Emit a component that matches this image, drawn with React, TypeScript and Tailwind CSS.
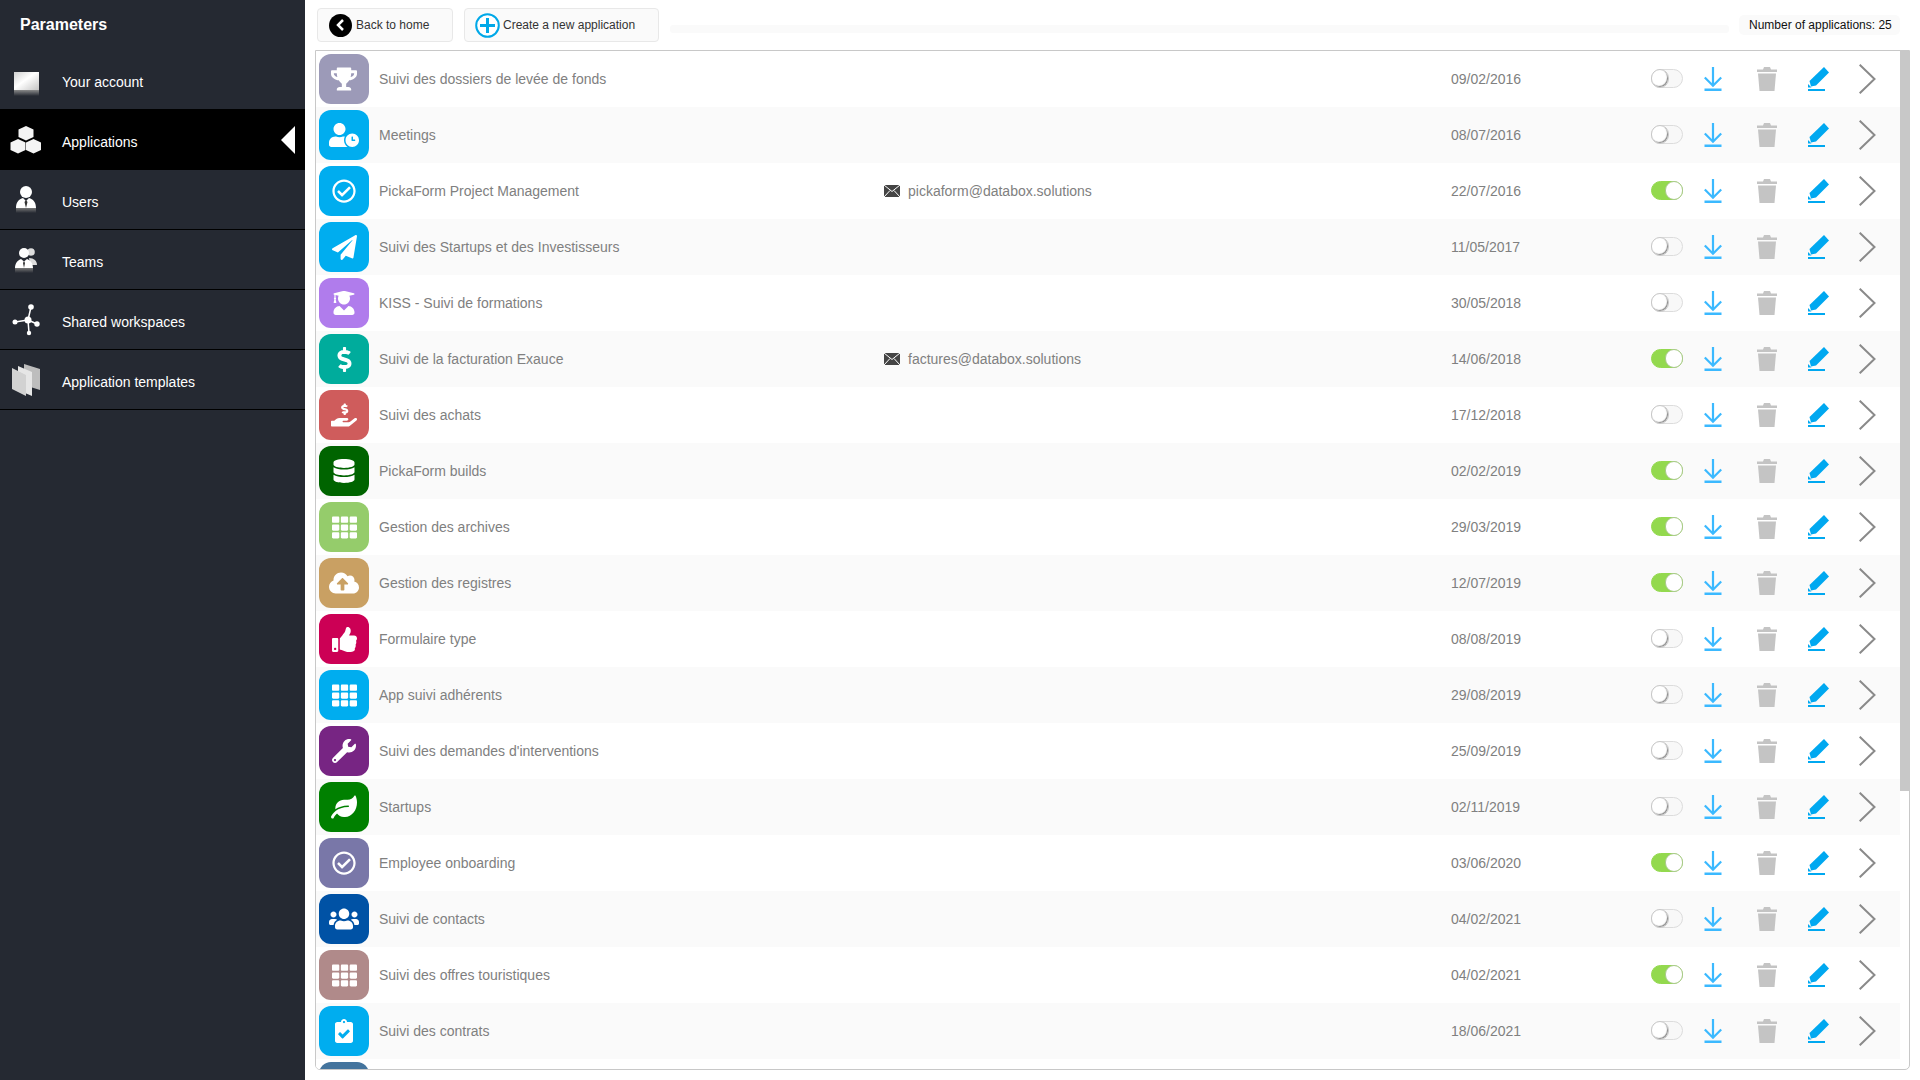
import React from "react";
import {
  FaTrophy, FaUserClock, FaRegCheckCircle, FaPaperPlane, FaUserGraduate, FaDollarSign,
  FaHandHoldingUsd, FaDatabase, FaTh, FaCloudUploadAlt, FaThumbsUp, FaWrench, FaLeaf, FaUsers, FaClipboardCheck,
} from "react-icons/fa";

type Row = { name: string; date: string; on: boolean; color: string; Icon: React.ComponentType<{ size?: number }>; size: number; email?: string };

const rows: Row[] = [
  { name: "Suivi des dossiers de levée de fonds", date: "09/02/2016", on: false, color: "bg-[#9c9ab8]", Icon: FaTrophy, size: 26 },
  { name: "Meetings", date: "08/07/2016", on: false, color: "bg-[#00adef]", Icon: FaUserClock, size: 30 },
  { name: "PickaForm Project Management", date: "22/07/2016", on: true, color: "bg-[#00adef]", Icon: FaRegCheckCircle, size: 24, email: "pickaform@databox.solutions" },
  { name: "Suivi des Startups et des Investisseurs", date: "11/05/2017", on: false, color: "bg-[#00adef]", Icon: FaPaperPlane, size: 25 },
  { name: "KISS - Suivi de formations", date: "30/05/2018", on: false, color: "bg-[#b07cec]", Icon: FaUserGraduate, size: 24 },
  { name: "Suivi de la facturation Exauce", date: "14/06/2018", on: true, color: "bg-[#00ac9c]", Icon: FaDollarSign, size: 25, email: "factures@databox.solutions" },
  { name: "Suivi des achats", date: "17/12/2018", on: false, color: "bg-[#cf5c5c]", Icon: FaHandHoldingUsd, size: 26 },
  { name: "PickaForm builds", date: "02/02/2019", on: true, color: "bg-[#006400]", Icon: FaDatabase, size: 24 },
  { name: "Gestion des archives", date: "29/03/2019", on: true, color: "bg-[#95cc6b]", Icon: FaTh, size: 25 },
  { name: "Gestion des registres", date: "12/07/2019", on: true, color: "bg-[#c9a063]", Icon: FaCloudUploadAlt, size: 30 },
  { name: "Formulaire type", date: "08/08/2019", on: false, color: "bg-[#cc0055]", Icon: FaThumbsUp, size: 25 },
  { name: "App suivi adhérents", date: "29/08/2019", on: false, color: "bg-[#00adef]", Icon: FaTh, size: 25 },
  { name: "Suivi des demandes d'interventions", date: "25/09/2019", on: false, color: "bg-[#772583]", Icon: FaWrench, size: 24 },
  { name: "Startups", date: "02/11/2019", on: false, color: "bg-[#008000]", Icon: FaLeaf, size: 26 },
  { name: "Employee onboarding", date: "03/06/2020", on: true, color: "bg-[#7977a8]", Icon: FaRegCheckCircle, size: 24 },
  { name: "Suivi de contacts", date: "04/02/2021", on: false, color: "bg-[#0052a5]", Icon: FaUsers, size: 30 },
  { name: "Suivi des offres touristiques", date: "04/02/2021", on: true, color: "bg-[#b08a8a]", Icon: FaTh, size: 25 },
  { name: "Suivi des contrats", date: "18/06/2021", on: false, color: "bg-[#00adef]", Icon: FaClipboardCheck, size: 24 },
  { name: "", date: "", on: false, color: "bg-[#44749d]", Icon: FaTh, size: 0 },
];

const AccountIcon = () => (
  <svg className="w-[62px] h-[59px] shrink-0" viewBox="0 0 62 59">
    <defs>
      <linearGradient id="acc" x1="0" y1="0" x2="1" y2="1">
        <stop offset="0" stopColor="#d0d0d0" />
        <stop offset="0.45" stopColor="#ffffff" />
        <stop offset="1" stopColor="#c4c4c4" />
      </linearGradient>
      <linearGradient id="accr" x1="0" y1="0" x2="0" y2="1">
        <stop offset="0" stopColor="#8a8a8a" />
        <stop offset="1" stopColor="#252932" />
      </linearGradient>
    </defs>
    <rect x="14" y="22" width="25" height="18" fill="url(#acc)" />
    <rect x="14" y="40" width="25" height="6" fill="url(#accr)" />
  </svg>
);

const CubesIcon = () => (
  <svg className="w-[62px] h-[61px] shrink-0" viewBox="0 0 62 61">
    <g fill="#f4f4f4">
      <path d="M26 17l7.500 3.500v7.500l-7.500 3.500-7.500-3.500v-7.500z" />
      <path d="M18 30l7.500 3.500v7.500l-7.500 3.500-7.500-3.500v-7.500z" />
      <path d="M33.500 30l7.500 3.500v7.500l-7.500 3.500-7.500-3.500v-7.500z" />
    </g>
  </svg>
);

const UserIcon = () => (
  <svg className="w-[62px] h-[60px] shrink-0" viewBox="0 0 62 60">
    <defs>
      <linearGradient id="ur" x1="0" y1="0" x2="0" y2="1">
        <stop offset="0" stopColor="#777" />
        <stop offset="1" stopColor="#252932" />
      </linearGradient>
    </defs>
    <circle cx="26" cy="22" r="6" fill="#fff" />
    <path d="M16 38c0-6 3-9 7-10l3 3 3-3c4 1 7 4 7 10z" fill="#fff" />
    <path d="M26 30l-1.500 2 1.500 6 1.500-6z" fill="#333" />
    <rect x="16" y="38" width="20" height="5" fill="url(#ur)" />
  </svg>
);

const TeamIcon = () => (
  <svg className="w-[62px] h-[60px] shrink-0" viewBox="0 0 62 60">
    <defs>
      <linearGradient id="tr" x1="0" y1="0" x2="0" y2="1">
        <stop offset="0" stopColor="#777" />
        <stop offset="1" stopColor="#252932" />
      </linearGradient>
    </defs>
    <circle cx="31" cy="22" r="3.800" fill="#ddd" />
    <path d="M29 28c5 0 8 3 8 7h-7z" fill="#ddd" />
    <circle cx="24" cy="23" r="5" fill="#fff" />
    <path d="M15 38c0-5 3-8 6-9l3 2.500 3-2.500c3 1 6 4 6 9z" fill="#fff" />
    <path d="M24 31l-1 2 1 5 1-5z" fill="#333" />
    <rect x="15" y="38" width="18" height="5" fill="url(#tr)" />
  </svg>
);

const NodesIcon = () => (
  <svg className="w-[62px] h-[60px] shrink-0" viewBox="0 0 62 60">
    <path d="M28 30L31 17M28 30L15 32M28 30L37 34M28 30L29 43" stroke="#fff" strokeWidth="1.500" />
    <circle cx="28" cy="30" r="3.500" fill="#fff" />
    <circle cx="31" cy="17" r="2.800" fill="#fff" />
    <circle cx="15" cy="32" r="2.500" fill="#fff" />
    <circle cx="37" cy="34" r="2.700" fill="#fff" />
    <circle cx="29" cy="43" r="2.200" fill="#fff" />
  </svg>
);

const TemplatesIcon = () => (
  <svg className="w-[62px] h-[60px] shrink-0" viewBox="0 0 62 60">
    <path d="M24 14l16 5v21l-16-5z" fill="#bdbdbd" />
    <path d="M18 16l14 6v24l-14-6z" fill="#e6e6e6" />
    <path d="M12 18l14 7v21l-14-7z" fill="#d2d2d2" />
  </svg>
);

const SideItem = ({ label, icon, active, border }: { label: string; icon: React.ReactNode; active?: boolean; border?: boolean }) => (
  <div className={`flex items-start text-[14px] leading-[20px] text-white ${active ? "bg-black h-[61px] pt-0" : border ? "h-[60px] border-b border-black" : "h-[59px]"}`}>
    {icon}
    <span className={active ? "pt-[23px]" : "pt-[22px]"}>{label}</span>
    {active && (
      <svg className="ml-auto mr-[10px] mt-[17px] w-[14px] h-[28px]" viewBox="0 0 14 28">
        <path d="M14 0v28L0 14z" fill="#fff" />
      </svg>
    )}
  </div>
);

const Toggle = ({ on }: { on: boolean }) => (
  <div className={`relative -mt-[1px] w-[32px] h-[19px] rounded-full border shrink-0 ${on ? "bg-[#93d94e] border-[#93d94e]" : "bg-[#f8f8f8] border-[#dcdcdc]"}`}>
    <div className={`absolute top-[-1px] w-[18px] h-[19px] rounded-full bg-white ${on ? "right-[-1px] border border-[#a9c98a]" : "left-[-1px] shadow-[inset_-1px_-1px_1px_#8a8a8a] border border-[#c8c8c8]"}`} />
  </div>
);

const Download = () => (
  <svg className="w-[18px] h-[24px] shrink-0" viewBox="0 0 18 24">
    <path d="M9 0v18.500M0.800 10.500L9 18.700l8.200-8.200" fill="none" stroke="#3bb9ff" strokeWidth="2.200" />
    <rect x="0.500" y="21.500" width="17" height="2.500" fill="#3bb9ff" />
  </svg>
);

const Trash = () => (
  <svg className="w-[20px] h-[24px] shrink-0" viewBox="0 0 20 24">
    <path d="M7 0h6l1 2.500h6V5H0V2.500h6z" fill="#c4c4c4" />
    <path d="M1 6.500h18L17.500 24h-15z" fill="#c4c4c4" />
  </svg>
);

const Pen = () => (
  <svg className="w-[22px] h-[24px] shrink-0" viewBox="0 0 22 24">
    <path d="M16 0L21 5.500 8 18.500l-5 1L1.500 14z" fill="#00a8f0" />
    <path d="M0 17l3.500 3.500H0z" fill="#00a8f0" />
    <rect x="0" y="22" width="17" height="2" fill="#00a8f0" />
  </svg>
);

const Chevron = () => (
  <svg className="w-[17px] h-[30px] shrink-0" viewBox="0 0 17 30">
    <path d="M0.700 0.700L15.500 15 0.700 29.300" fill="none" stroke="#8a8a8a" strokeWidth="2" />
  </svg>
);

const MailIcon = () => (
  <svg className="w-[16px] h-[12px] shrink-0 mr-[8px] -mt-[1px]" viewBox="0 0 16 12">
    <rect width="16" height="12" fill="#444" />
    <path d="M0 0l8 6.500L16 0M0 12l6-6.500M16 12l-6-6.500" stroke="#fff" strokeWidth="1" fill="none" />
  </svg>
);

const AppRow = ({ r, striped }: { r: Row; striped: boolean }) => (
  <div className={`flex items-center h-[56px] pl-[3px] shrink-0 text-[14px] text-[#808080] ${striped ? "bg-[#fafafa]" : "bg-white"}`}>
    <div className={`w-[50px] h-[50px] rounded-[12px] shrink-0 flex items-center justify-center text-white ${r.color}`}>
      {r.size > 0 && <r.Icon size={r.size} />}
    </div>
    {r.name && (
      <>
        <div className="w-[515px] pl-[10px] shrink-0">{r.name}</div>
        <div className="w-[567px] shrink-0 flex items-center">
          {r.email && <MailIcon />}
          {r.email}
        </div>
        <div className="w-[200px] shrink-0">{r.date}</div>
        <Toggle on={r.on} />
        <div className="ml-[21px]"><Download /></div>
        <div className="ml-[35px]"><Trash /></div>
        <div className="ml-[31px]"><Pen /></div>
        <div className="ml-[29px]"><Chevron /></div>
      </>
    )}
  </div>
);

export default function App() {
  return (
    <div className="flex w-[1920px] h-[1080px] overflow-hidden bg-white font-['Liberation_Sans',Arial,sans-serif]">
      <aside className="w-[305px] shrink-0 bg-[#252932]">
        <div className="h-[50px] pl-[20px] pt-[16px] text-[16px] leading-[18px] font-bold text-white">Parameters</div>
        <SideItem label="Your account" icon={<AccountIcon />} />
        <SideItem label="Applications" icon={<CubesIcon />} active />
        <SideItem label="Users" icon={<UserIcon />} border />
        <SideItem label="Teams" icon={<TeamIcon />} border />
        <SideItem label="Shared workspaces" icon={<NodesIcon />} border />
        <SideItem label="Application templates" icon={<TemplatesIcon />} border />
      </aside>
      <main className="flex-1 min-w-0 flex flex-col">
        <div className="h-[50px] flex items-start pl-[12px] shrink-0 text-[12px]">
          <div className="mt-[8px] w-[136px] h-[34px] flex items-center pl-[11px] rounded-[4px] border border-[#e8e8e8] bg-[#fafafa] text-[#333]">
            <span className="w-[23px] h-[23px] rounded-full bg-black flex items-center justify-center mr-[4px] shrink-0">
              <svg className="w-[9px] h-[12px]" viewBox="0 0 9 12"><path d="M7 1L2 6l5 5" fill="none" stroke="#fff" strokeWidth="2.500" /></svg>
            </span>
            Back to home
          </div>
          <div className="mt-[8px] ml-[11px] w-[195px] h-[34px] flex items-center pl-[10px] rounded-[4px] border border-[#e8e8e8] bg-[#fafafa] text-[#333]">
            <svg className="w-[25px] h-[25px] mr-[3px] shrink-0" viewBox="0 0 25 25">
              <circle cx="12.500" cy="12.500" r="11.300" fill="#fff" stroke="#00a8e8" strokeWidth="2" />
              <path d="M12.500 5v15M5 12.500h15" stroke="#00a8e8" strokeWidth="3" />
            </svg>
            Create a new application
          </div>
          <div className="mt-[25px] ml-[11px] w-[1059px] h-[8px] rounded-[3px] bg-[#fafafa]" />
          <div className="mt-[15px] ml-[10px] w-[161px] h-[20px] flex items-center pl-[10px] rounded-[5px] bg-[#fafafa] text-[#111]">Number of applications: 25</div>
        </div>
        <div className="ml-[10px] w-[1595px] h-[1020px] border border-[#c8c8c8] rounded-b-[5px] overflow-hidden flex">
          <div className="w-[1584px] shrink-0 flex flex-col">
            {rows.map((r, i) => (
              <AppRow key={i} r={r} striped={i % 2 === 1} />
            ))}
          </div>
          <div className="w-[9px] ml-auto h-[740px] bg-[#c8c8c8]" />
        </div>
      </main>
    </div>
  );
}
